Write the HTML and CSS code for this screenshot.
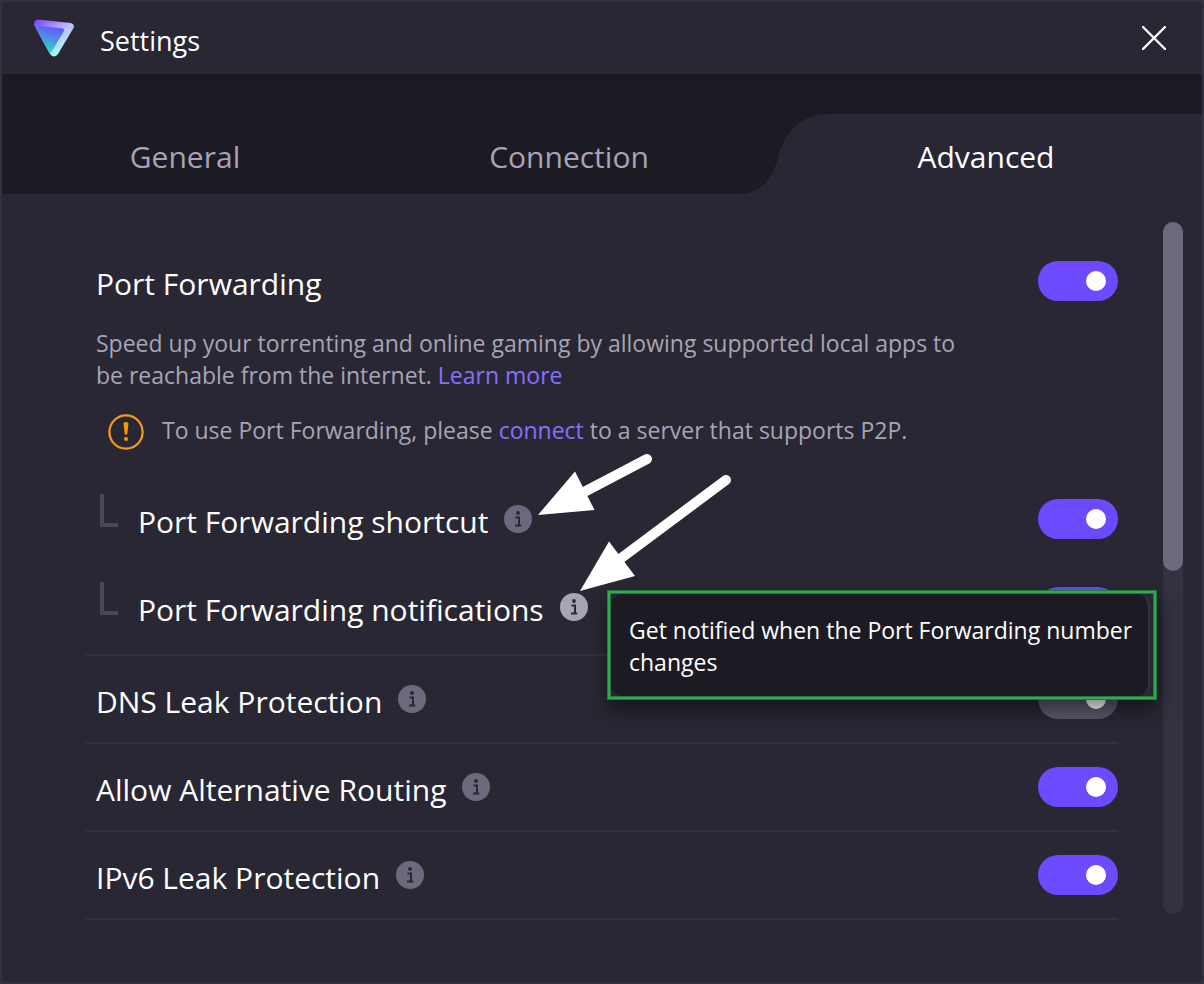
FILE: index.html
```
<!DOCTYPE html>
<html lang="en">
<head>
    <meta charset="UTF-8">
    <meta name="viewport" content="width=device-width, initial-scale=1.0">
    <title>Settings</title>
    <link rel="stylesheet" href="styles.css">
</head>
<body>
    <svg class="symbols" aria-hidden="true">
        <symbol id="info" viewBox="0 0 28 28">
            <circle cx="14" cy="14" r="14" fill="currentColor"/>
            <circle cx="14" cy="8" r="1.9" fill="#292733"/>
            <path d="M11.5 12.5H15V20M11 20.5H17.3" fill="none" stroke="#292733" stroke-width="2"/>
        </symbol>
    </svg>
    <div class="window">
        <header class="titlebar">
            <svg class="logo" width="40" height="38" viewBox="0 0 40 38">
                <defs>
                    <linearGradient id="outer" x1="4" y1="2" x2="26" y2="36" gradientUnits="userSpaceOnUse">
                        <stop offset="0" stop-color="#7a50ff"/>
                        <stop offset="0.5" stop-color="#c4b9ff"/>
                        <stop offset="1" stop-color="#a8fff0"/>
                    </linearGradient>
                    <linearGradient id="inner" x1="22" y1="6" x2="14" y2="34" gradientUnits="userSpaceOnUse">
                        <stop offset="0" stop-color="#6b4dff"/>
                        <stop offset="0.5" stop-color="#4c8fe8"/>
                        <stop offset="1" stop-color="#2ce0c0"/>
                    </linearGradient>
                </defs>
                <path d="M4 0.5L36.5 4Q41 5 39.5 9L24 35Q20 40 16 35L0.6 7Q-1 1 4 0.5Z" fill="url(#outer)"/>
                <path d="M0.6 6.5L28 9.2Q31 10 29.6 12.6L17.5 33Q16.5 35 15.5 34Z" fill="url(#inner)"/>
            </svg>
            <h1>Settings</h1>
            <button class="close" aria-label="Close">
                <svg width="24" height="24" viewBox="0 0 24 24">
                    <path d="M1 1L23 23M23 1L1 23" stroke="#fff" stroke-width="2.4" stroke-linecap="round"/>
                </svg>
            </button>
        </header>

        <nav class="tabs">
            <button class="tab">General</button>
            <button class="tab">Connection</button>
            <button class="tab active">
                <svg class="curve" width="90" height="80" viewBox="0 0 90 80">
                    <path d="M0 80C22 80 34 66 40 44C46 18 64 0 90 0V80Z"/>
                </svg>
                <span>Advanced</span>
            </button>
        </nav>

        <main class="content">
            <div class="settings">
                <section class="group">
                    <div class="row first">
                        <label for="pf">Port Forwarding</label>
                        <input type="checkbox" class="toggle" id="pf" checked>
                    </div>
                    <p class="description">Speed up your torrenting and online gaming by allowing supported local apps to be reachable from the internet. <a href="#">Learn more</a></p>
                    <div class="notice">
                        <svg width="36" height="36" viewBox="0 0 36 36">
                            <circle cx="18" cy="18" r="16.6" fill="none" stroke="#f79a1c" stroke-width="2.2"/>
                            <path d="M15.6 9.5Q15.6 8 18 8Q20.4 8 20.4 9.5L19.2 20.5H16.8Z" fill="#ff9900"/>
                            <circle cx="18" cy="25" r="2" fill="#ff9900"/>
                        </svg>
                        <p>To use Port Forwarding, please <a href="#">connect</a> to a server that supports P2P.</p>
                    </div>
                    <div class="row sub">
                        <label for="shortcut">Port Forwarding shortcut</label>
                        <svg class="info"><use href="#info"/></svg>
                        <input type="checkbox" class="toggle" id="shortcut" checked>
                    </div>
                    <div class="row sub">
                        <label for="notifications">Port Forwarding notifications</label>
                        <svg class="info hover"><use href="#info"/></svg>
                        <input type="checkbox" class="toggle" id="notifications" checked>
                        <div class="highlight">
                            <div class="tooltip" role="tooltip">Get notified when the Port Forwarding number changes</div>
                        </div>
                        <svg class="arrows" width="196" height="140" viewBox="0 0 196 140">
                            <g stroke="#fff" stroke-width="10" stroke-linecap="round">
                                <path d="M109 7L48 39"/>
                                <path d="M188 28L82 107"/>
                            </g>
                            <path d="M0 63L37 19.500L56.500 58Z" fill="#fff"/>
                            <path d="M42 139L71 89.500L97 124Z" fill="#fff"/>
                        </svg>
                    </div>
                </section>
                <div class="row">
                    <label for="dns">DNS Leak Protection</label>
                    <svg class="info"><use href="#info"/></svg>
                    <input type="checkbox" class="toggle" id="dns" checked disabled>
                </div>
                <div class="row">
                    <label for="routing">Allow Alternative Routing</label>
                    <svg class="info"><use href="#info"/></svg>
                    <input type="checkbox" class="toggle" id="routing" checked>
                </div>
                <div class="row">
                    <label for="ipv6">IPv6 Leak Protection</label>
                    <svg class="info"><use href="#info"/></svg>
                    <input type="checkbox" class="toggle" id="ipv6" checked>
                </div>
            </div>
            <div class="scrollbar"><div class="thumb"></div></div>
        </main>
    </div>
</body>
</html>
```
FILE: styles.css
```
*, *::before {
    box-sizing: border-box;
}
body {
    margin: 0;
    font-family: "Open Sans", "Noto Sans", sans-serif;
    background: #292733;
    color: #fff;
}
h1, p {
    margin: 0;
}
a {
    color: #8a6eff;
    text-decoration: none;
}
button {
    padding: 0;
    border: none;
    background: none;
    color: inherit;
    font-family: inherit;
    cursor: pointer;
}
.symbols {
    position: absolute;
    width: 0;
    height: 0;
}
.window {
    display: flex;
    flex-direction: column;
    min-height: 100vh;
    border: 2px solid #343140;
}

/* title bar */
.titlebar {
    display: flex;
    align-items: center;
    height: 72px;
    padding: 0 36px 0 32px;
}
.titlebar h1 {
    margin-left: 26px;
    padding-top: 4px;
    font-size: 27px;
    font-weight: 400;
}
.close {
    display: flex;
    margin-left: auto;
}

/* tabs */
.tabs {
    display: grid;
    grid-template-columns: 366fr 402fr 432fr;
    height: 120px;
    padding-top: 40px;
    background: #1c1b24;
}
.tab {
    position: relative;
    padding-top: 4px;
    font-size: 30px;
    color: #a7a4b5;
}
.tab.active {
    background: linear-gradient(#292733, #292733) right / calc(100% - 57px) 100% no-repeat;
    color: #fff;
}
.curve {
    position: absolute;
    left: -32px;
    top: 0;
    fill: #292733;
}

/* settings list */
.content {
    display: flex;
    flex: 1;
    gap: 45px;
    padding: 28px 19px 0 84px;
}
.settings {
    flex: 1;
}
.row {
    position: relative;
    display: flex;
    align-items: center;
    height: 88px;
    padding-left: 10px;
    border-bottom: 2px solid #343140;
    font-size: 30px;
}
.row label {
    padding-top: 4px;
}
.group {
    padding: 15px 0 3px;
    border-bottom: 2px solid #343140;
}
.group .row {
    border-bottom: none;
}
.description {
    max-width: 900px;
    padding: 2px 0 0 10px;
}
.description, .notice {
    font-size: 23px;
    line-height: 32px;
    color: #a7a4b5;
}
.notice {
    display: flex;
    align-items: flex-start;
    gap: 18px;
    margin: 23px 0 25px;
    padding-left: 22px;
}
.row.sub {
    padding-left: 52px;
}
.row.sub::before {
    content: "";
    position: absolute;
    left: 14px;
    top: 19px;
    width: 18px;
    height: 33px;
    border: solid #4a4658;
    border-width: 0 0 4px 4px;
}
.info {
    width: 28px;
    height: 28px;
    margin-left: 16px;
    color: #6d697d;
}
.info.hover {
    color: #a7a4b5;
}

.toggle {
    appearance: none;
    display: flex;
    align-items: center;
    justify-content: flex-end;
    width: 80px;
    height: 40px;
    margin: 0 0 0 auto;
    padding-right: 12px;
    border-radius: 20px;
    background: #6d4aff;
}
.toggle::before {
    content: "";
    width: 20px;
    height: 20px;
    border-radius: 50%;
    background: #fff;
}
.toggle:disabled {
    background: #5b576b;
}

/* tooltip and pointers */
.highlight {
    position: absolute;
    z-index: 1;
    top: 28px;
    right: -38px;
    width: 548px;
    padding: 1px 4px 1px 1px;
    border: 2px solid #32a852;
    background: #292733;
    box-shadow: 0 0 0 1px #1f7d3c, inset 0 0 0 1px #1f7d3c, 0 10px 20px rgba(0, 0, 0, 0.5);
}
.tooltip {
    padding: 20px 8px 18px 18px;
    border-right: 2px solid #343140;
    border-radius: 12px;
    background: #1c1b24;
    font-size: 23px;
    line-height: 32px;
}
.arrows {
    position: absolute;
    z-index: 2;
    left: 452px;
    top: -111px;
}

.scrollbar {
    width: 20px;
    height: 692px;
    border-radius: 10px;
    background: #343140;
}
.thumb {
    height: 349px;
    border-radius: 10px;
    background: #6d697d;
}
```
